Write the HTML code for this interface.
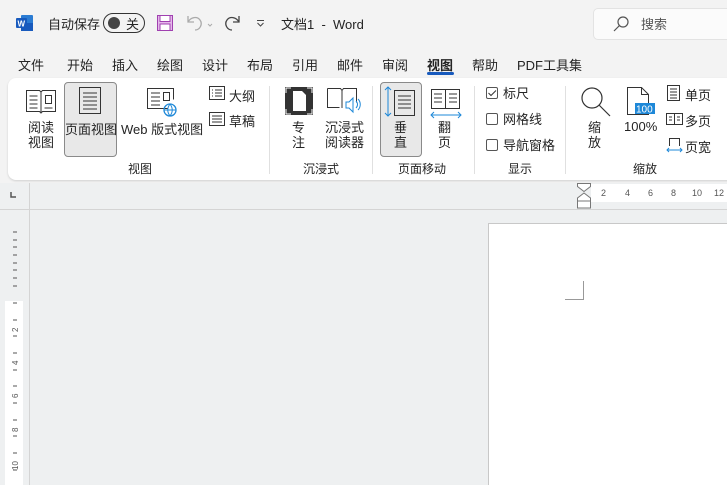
<!DOCTYPE html>
<html style="overflow:hidden;width:727px;height:485px"><head><meta charset="utf-8"><style>
*{margin:0;padding:0;box-sizing:border-box}
html,body{overflow:hidden}
body{width:727px;height:485px;background:#f3f3f3;font-family:"Liberation Sans","Noto Sans CJK SC",sans-serif;color:#242424;position:relative}
.a{position:absolute;white-space:nowrap}
.t{font-size:13px}
.s{font-size:12px}
svg{position:absolute;overflow:visible}
.sep{position:absolute;width:1px;background:#e0e0e0;top:86px;height:88px}
</style></head><body>
<svg style="left:16px;top:15px" width="17" height="16"><rect x="5" y="0" width="12" height="16" rx="1" fill="#2b7cd3"/><rect x="5" y="8" width="12" height="8" fill="#185abd"/><rect x="0" y="3" width="11" height="10" rx="1" fill="#185abd"/><text x="1.5" y="11.5" font-size="8" font-weight="bold" fill="#fff" font-family="Liberation Sans">W</text></svg>
<div class="a t" style="left:48px;top:14px">自动保存</div>
<div class="a" style="left:103px;top:13px;width:42px;height:20px;border:1px solid #333;border-radius:10px"></div>
<div class="a" style="left:108px;top:17px;width:12px;height:12px;border-radius:6px;background:#444"></div>
<div class="a t" style="left:126px;top:14px">关</div>
<svg style="left:157px;top:15px" width="16" height="16"><rect x="0.5" y="0.5" width="15" height="15" fill="#e5b8ea" stroke="#a040b0"/><rect x="3" y="0.5" width="10" height="6" fill="#fff" stroke="#a040b0"/><rect x="3" y="9" width="10" height="6.5" fill="#fff" stroke="#a040b0"/></svg>
<svg style="left:186px;top:14px" width="20" height="18" fill="none" stroke="#aaa" stroke-width="1.3"><path d="M2 2v6h6M2 8c3-5 9-6 12-2s0 10-5 10"/><path d="M22 10l2 2 2-2" stroke-width="1"/></svg>
<svg style="left:224px;top:14px" width="18" height="18" fill="none" stroke="#444" stroke-width="1.3"><path d="M15 2v6h-6M15 8c-3-5-9-6-12-2s0 10 5 10"/></svg>
<svg style="left:256px;top:20px" width="9" height="6" fill="none" stroke="#444"><path d="M1 0.5h7M1.5 3l3 3 3-3"/></svg>
<div class="a t" style="left:281px;top:14px">文档1 &nbsp;-&nbsp; Word</div>
<div class="a" style="left:593px;top:8px;width:140px;height:32px;background:#fbfbfb;border:1px solid #e3e3e3;border-radius:5px"></div>
<svg style="left:613px;top:16px" width="16" height="16" fill="none" stroke="#555" stroke-width="1.2"><circle cx="10" cy="6" r="5"/><path d="M6.5 9.5L1 15"/></svg>
<div class="a t" style="left:641px;top:14px;color:#555">搜索</div>
<div class="a t" style="top:55px;left:18px">文件</div>
<div class="a t" style="top:55px;left:67px">开始</div>
<div class="a t" style="top:55px;left:112px">插入</div>
<div class="a t" style="top:55px;left:157px">绘图</div>
<div class="a t" style="top:55px;left:202px">设计</div>
<div class="a t" style="top:55px;left:247px">布局</div>
<div class="a t" style="top:55px;left:292px">引用</div>
<div class="a t" style="top:55px;left:337px">邮件</div>
<div class="a t" style="top:55px;left:382px">审阅</div>
<div class="a t" style="top:55px;left:427px;font-weight:bold">视图</div>
<div class="a" style="top:72px;left:427px;width:27px;height:3px;border-radius:2px;background:#185abd"></div>
<div class="a t" style="top:55px;left:472px">帮助</div>
<div class="a t" style="top:55px;left:517px">PDF工具集</div>
<div class="a" style="left:8px;top:78px;width:740px;height:102px;background:#fff;border-radius:8px;box-shadow:0 1px 2px rgba(0,0,0,.15)"></div>
<svg style="left:26px;top:88px" width="30" height="26" fill="none" stroke="#333"><path d="M0.5 2.5h13l1.5 1.5 1.5-1.5h13v21h-13l-1.5 1.5-1.5-1.5h-13z M15 4v20"/><path d="M3.5 8h8M3.5 12h8M3.5 16h8M3.5 20h8M18.5 20h8"/><rect x="19.5" y="7.5" width="6" height="8"/></svg>
<div class="a t" style="left:28px;top:120px;line-height:15px;text-align:center">阅读<br>视图</div>
<div class="a" style="left:64px;top:82px;width:53px;height:75px;background:#e8e8e8;border:1px solid #8a8a8a;border-radius:4px"></div>
<svg style="left:79px;top:87px" width="22" height="28" fill="none" stroke="#333"><rect x="0.5" y="0.5" width="21" height="26"/><path d="M4 6h14M4 10h14M4 14h14M4 18h14M4 22h14"/></svg>
<div class="a t" style="left:65px;top:119px">页面视图</div>
<svg style="left:147px;top:88px" width="32" height="30" fill="none" stroke="#333"><path d="M20.5 20.5h-20v-20h26v11"/><path d="M4 5h9M4 9h9M4 13h9M4 17h9"/><rect x="16.5" y="4.5" width="6" height="8"/><circle cx="23" cy="22" r="6" stroke="#1e88d8" stroke-width="1.3"/><path d="M17 22h12M23 16c-3 4-3 8 0 12M23 16c3 4 3 8 0 12" stroke="#1e88d8"/></svg>
<div class="a t" style="left:121px;top:119px">Web 版式视图</div>
<svg style="left:209px;top:86px" width="16" height="14" fill="none" stroke="#333"><rect x="0.5" y="0.5" width="15" height="13"/><path d="M3 4h1M6 4h7M3 7h1M6 7h7M3 10h1M6 10h7"/></svg>
<div class="a t" style="left:229px;top:86px">大纲</div>
<svg style="left:209px;top:112px" width="16" height="14" fill="none" stroke="#333"><rect x="0.5" y="0.5" width="15" height="13"/><path d="M3 4h10M3 7h10M3 10h10"/></svg>
<div class="a t" style="left:229px;top:111px">草稿</div>
<div class="a s" style="left:128px;top:160px">视图</div>
<div class="sep" style="left:269px"></div>
<svg style="left:285px;top:87px" width="28" height="28"><rect width="28" height="28" fill="#333"/><path d="M8 4h9l4 4v16h-13z" fill="#fff"/><path d="M1 6V1h5M22 1h5v5M27 22v5h-5M6 27H1v-5" stroke="#fff" fill="none"/></svg>
<div class="a t" style="left:292px;top:120px;line-height:15px">专<br>注</div>
<svg style="left:327px;top:88px" width="34" height="28" fill="none" stroke="#333"><path d="M0.5 0.5h13l1.5 2 1.5-2h13v14M15 3v17M0.5 0.5v19h12"/><path d="M19 14h3l4-4v14l-4-4h-3z M29 13c2 2 2 5 0 7M31 11c3 3 3 8 0 11" stroke="#1e88d8"/></svg>
<div class="a t" style="left:325px;top:120px;line-height:15px">沉浸式<br>阅读器</div>
<div class="a s" style="left:303px;top:160px">沉浸式</div>
<div class="sep" style="left:372px"></div>
<div class="a" style="left:380px;top:82px;width:42px;height:75px;background:#e8e8e8;border:1px solid #8a8a8a;border-radius:4px"></div>
<svg style="left:384px;top:86px" width="32" height="32" fill="none"><path d="M4 1v29M1 4l3-3 3 3M1 27l3 3 3-3" stroke="#1e88d8"/><rect x="10.5" y="4.5" width="20" height="25" stroke="#333"/><path d="M14 10h13M14 14h13M14 18h13M14 22h13" stroke="#333"/></svg>
<div class="a t" style="left:394px;top:120px;line-height:15px">垂<br>直</div>
<svg style="left:430px;top:89px" width="32" height="30" fill="none"><path d="M1.5 0.5h28v19h-28z M15.5 0.5v19" stroke="#333"/><path d="M4 5h8M4 9h8M4 13h8M19 5h8M19 9h8M19 13h8" stroke="#333"/><path d="M1 26h30M4 23l-3 3 3 3M28 23l3 3-3 3" stroke="#1e88d8"/></svg>
<div class="a t" style="left:438px;top:120px;line-height:15px">翻<br>页</div>
<div class="a s" style="left:398px;top:160px">页面移动</div>
<div class="sep" style="left:474px"></div>
<div class="a" style="left:486px;top:87px;width:12px;height:12px;border:1px solid #555;border-radius:2px"></div>
<svg style="left:488px;top:90px" width="9" height="7" fill="none" stroke="#333"><path d="M0.5 3l2.5 2.5 5-5"/></svg>
<div class="a t" style="left:503px;top:83px">标尺</div>
<div class="a" style="left:486px;top:113px;width:12px;height:12px;border:1px solid #555;border-radius:2px"></div>
<div class="a t" style="left:503px;top:109px">网格线</div>
<div class="a" style="left:486px;top:139px;width:12px;height:12px;border:1px solid #555;border-radius:2px"></div>
<div class="a t" style="left:503px;top:135px">导航窗格</div>
<div class="a s" style="left:508px;top:160px">显示</div>
<div class="sep" style="left:565px"></div>
<svg style="left:581px;top:87px" width="30" height="30" fill="none" stroke="#333" stroke-width="1.2"><circle cx="11" cy="11" r="10"/><path d="M18 18l11 11"/></svg>
<div class="a t" style="left:588px;top:120px;line-height:15px">缩<br>放</div>
<svg style="left:627px;top:87px" width="30" height="30" fill="none" stroke="#333"><path d="M0.5 0.5h14l7 7v20h-21z M14.5 0.5v7h7"/><rect x="8" y="16" width="20" height="11" fill="#1e88d8" stroke="none"/><text x="9" y="25.5" font-size="10" fill="#fff" stroke="none" font-family="Liberation Sans">100</text></svg>
<div class="a t" style="left:624px;top:119px">100%</div>
<svg style="left:667px;top:85px" width="13" height="16" fill="none" stroke="#333"><rect x="0.5" y="0.5" width="12" height="15"/><path d="M3 4h7M3 7h7M3 10h7M3 13h7"/></svg>
<div class="a t" style="left:685px;top:85px">单页</div>
<svg style="left:666px;top:113px" width="17" height="12" fill="none" stroke="#333"><rect x="0.5" y="0.5" width="16" height="11"/><path d="M8.5 0.5v11M3 4h3M3 7h3M11 4h3M11 7h3"/></svg>
<div class="a t" style="left:685px;top:111px">多页</div>
<svg style="left:666px;top:138px" width="17" height="15" fill="none"><path d="M3.5 8V0.5h10V8" stroke="#333"/><path d="M1 12h15M3 10l-2 2 2 2M14 10l2 2-2 2" stroke="#1e88d8"/></svg>
<div class="a t" style="left:685px;top:137px">页宽</div>
<div class="a s" style="left:633px;top:160px">缩放</div>
<div class="a" style="left:0;top:183px;width:727px;height:302px;background:#eef0f1"></div>
<div class="a" style="left:0;top:209px;width:727px;height:1px;background:#d4d4d4"></div>
<div class="a" style="left:29px;top:183px;width:1px;height:302px;background:#d4d4d4"></div>
<svg style="left:10px;top:192px" width="6" height="6" fill="none" stroke="#555" stroke-width="1.5"><path d="M1 0v5h5"/></svg>
<div class="a" style="left:591px;top:184px;width:136px;height:18px;background:#fff"></div>
<svg style="left:577px;top:183px" width="14" height="27" fill="#fff" stroke="#777"><path d="M0.5 0.5h13v3l-6.5 5-6.5-5z M7 10l6.5 5v3h-13v-3z M0.5 18h13v7h-13z"/></svg>
<div class="a" style="left:601px;top:188px;font-size:9px;color:#555">2</div>
<div class="a" style="left:625px;top:188px;font-size:9px;color:#555">4</div>
<div class="a" style="left:648px;top:188px;font-size:9px;color:#555">6</div>
<div class="a" style="left:671px;top:188px;font-size:9px;color:#555">8</div>
<div class="a" style="left:692px;top:188px;font-size:9px;color:#555">10</div>
<div class="a" style="left:714px;top:188px;font-size:9px;color:#555">12</div>
<div class="a" style="left:5px;top:301px;width:18px;height:184px;background:#fff"></div>
<svg style="left:10px;top:230px" width="10" height="250" fill="#555" stroke="#555"><path d="M3 2h4M3 10h4M3 17h4M3 25h4M3 33h4M3 40h4M3 48h4M3 56h4M3 73h4M3 90h4M3 106h4M3 123h4M3 140h4M3 156h4M3 173h4M3 190h4M3 206h4M3 223h4M3 240h4"/><g stroke="none" font-size="8" font-family="Liberation Sans"><text transform="translate(8,102) rotate(-90)">2</text><text transform="translate(8,135) rotate(-90)">4</text><text transform="translate(8,168) rotate(-90)">6</text><text transform="translate(8,202) rotate(-90)">8</text><text transform="translate(8,240) rotate(-90)">10</text></g></svg>
<div class="a" style="left:488px;top:223px;width:239px;height:262px;background:#fff;border:1px solid #c8c8c8;border-bottom:none;border-right:none"></div>
<svg style="left:565px;top:281px" width="20" height="20" fill="none" stroke="#999"><path d="M18.5 0v18.5H0"/></svg>
</body></html>
